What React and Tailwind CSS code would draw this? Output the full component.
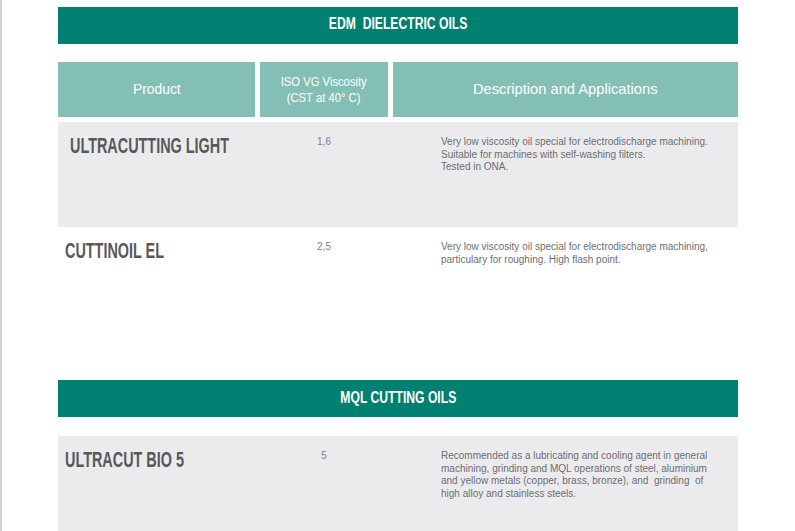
import React from 'react'

const edmRows = [
  {
    name: 'ULTRACUTTING LIGHT',
    visc: '1,6',
    desc: ['Very low viscosity oil special for electrodischarge machining.', 'Suitable for machines with self-washing filters.', 'Tested in ONA.'],
    shaded: true,
    pad: 'pl-[12px]',
    h: 'h-[105px]',
  },
  {
    name: 'CUTTINOIL EL',
    visc: '2,5',
    desc: ['Very low viscosity oil special for electrodischarge machining,', 'particulary for roughing. High flash point.'],
    shaded: false,
    pad: 'pl-[7px]',
    h: 'h-[153px]',
  },
]

const mqlRow = {
  name: 'ULTRACUT BIO 5',
  visc: '5',
  desc: [
    'Recommended as a lubricating and cooling agent in general',
    'machining, grinding and MQL operations of steel, aluminium',
    'and yellow metals (copper, brass, bronze), and\u00a0 grinding\u00a0 of',
    'high alloy and stainless steels.',
  ],
  shaded: true,
  pad: 'pl-[7px]',
  h: 'h-[110px]',
}

const Row = ({ row }) => (
  <div className={`flex ${row.h} ${row.shaded ? 'bg-[#ebebed]' : 'bg-white'}`}>
    <div className={`w-[197px] ${row.pad} pt-[12px]`}>
      <h3 className="inline-block whitespace-nowrap origin-left scale-x-[0.655] text-[22px] leading-[24px] font-bold text-[#58595b]">
        {row.name}
      </h3>
    </div>
    <div className="w-[133px] pl-[5px] pt-[14px] text-center text-[10px] leading-[12.7px] text-[#808082]">
      {row.visc}
    </div>
    <div className="flex-1 pl-[53px] pt-[14px]">
      <div className="whitespace-nowrap text-[10px] leading-[12.6px] text-[#6d6e71]">
        {row.desc.map((l, i) => <p key={i}>{l}</p>)}
      </div>
    </div>
  </div>
)

const TitleBar = ({ children, pb }) => (
  <div className={`h-[37px] bg-[#008070] flex items-center justify-center ${pb}`}>
    <h2 className="whitespace-nowrap scale-x-[0.76] text-[16px] font-bold text-white">{children}</h2>
  </div>
)

export default function App() {
  return (
    <div className="h-[531px] overflow-hidden border-l-2 border-[#d4d4d4] bg-white" style={{ fontFamily: '"Liberation Sans", Arial, sans-serif' }}>
      <div className="ml-[56px] w-[680px] pt-[7px]">
        <TitleBar pb="pb-[4px]">EDM&nbsp;&nbsp;DIELECTRIC OILS</TitleBar>

        <div className="mt-[18px] flex gap-[5px] h-[55px] text-white">
          <div className="w-[197px] bg-[#83bfb5] flex items-center justify-center">
            <span className="scale-x-[0.92] text-[15px]">Product</span>
          </div>
          <div className="w-[128px] bg-[#83bfb5] flex flex-col items-center justify-center text-[13px] leading-[16px]">
            <span className="scale-x-[0.865] whitespace-nowrap">ISO VG Viscosity</span>
            <span className="scale-x-[0.865] whitespace-nowrap">(CST at 40° C)</span>
          </div>
          <div className="flex-1 bg-[#83bfb5] flex items-center justify-center">
            <span className="scale-x-[0.98] whitespace-nowrap text-[15px]">Description and Applications</span>
          </div>
        </div>

        <div className="mt-[5px]">
          {edmRows.map((r) => <Row key={r.name} row={r} />)}
        </div>

        <TitleBar pb="pb-[2px]">MQL CUTTING OILS</TitleBar>

        <div className="mt-[19px]">
          <Row row={mqlRow} />
        </div>
      </div>
    </div>
  )
}
